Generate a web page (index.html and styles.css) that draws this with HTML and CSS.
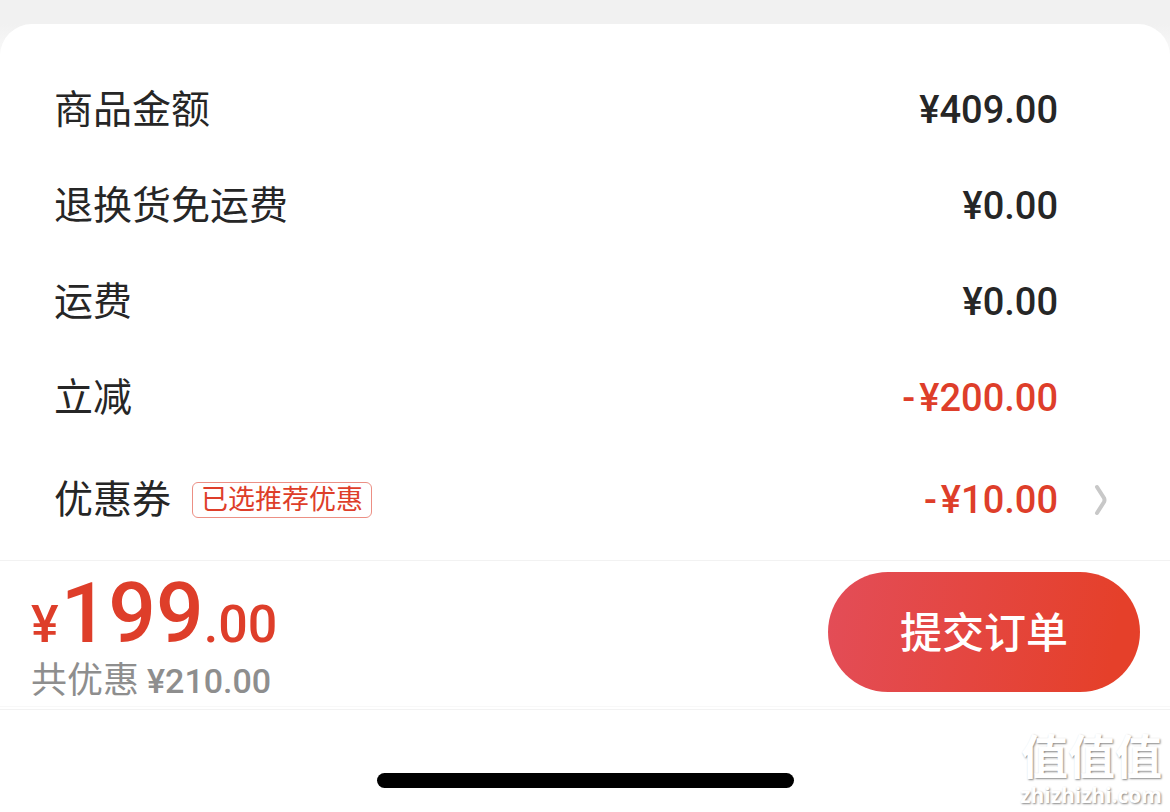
FILE: index.html
```html
<!DOCTYPE html>
<html lang="zh-CN">
<head>
    <meta charset="UTF-8">
    <meta name="viewport" content="width=device-width, initial-scale=1.0">
    <title>确认订单</title>
    <link rel="stylesheet" href="styles.css">
</head>
<body>
    <main class="summary">
        <div class="row">
            <span class="label">商品金额</span>
            <span class="amount">¥409.00</span>
        </div>
        <div class="row">
            <span class="label">退换货免运费</span>
            <span class="amount">¥0.00</span>
        </div>
        <div class="row">
            <span class="label">运费</span>
            <span class="amount">¥0.00</span>
        </div>
        <div class="row">
            <span class="label">立减</span>
            <span class="amount discount"><span class="minus">-</span>¥200.00</span>
        </div>
        <a class="row coupon" href="#">
            <span class="label">优惠券</span>
            <span class="tag">已选推荐优惠</span>
            <span class="amount discount"><span class="minus">-</span>¥10.00</span>
            <svg class="arrow" width="16" height="32" viewBox="0 0 16 32" aria-hidden="true">
                <path d="M5 3 L12 14 Q13 16 12 18 L5 29" fill="none" stroke="#c8c8c8" stroke-width="4" stroke-linejoin="round" stroke-linecap="round"/>
            </svg>
        </a>
    </main>

    <div class="submit-bar">
        <div class="total">
            <div class="price"><span class="symbol">¥</span><span class="integer">199</span><span class="decimal">.00</span></div>
            <div class="saved">共优惠<span class="saved-amount">¥210.00</span></div>
        </div>
        <button class="submit" type="button">提交订单</button>
    </div>

    <footer class="bottom">
        <div class="home-indicator"></div>
        <div class="watermark">
            <span class="watermark-name">值值值</span>
            <span class="watermark-site">zhizhizhi.com</span>
        </div>
    </footer>
</body>
</html>
```
FILE: styles.css
```css
* {
    box-sizing: border-box;
}
body {
    display: flex;
    flex-direction: column;
    min-height: 100vh;
    margin: 0;
    padding-top: 24px;
    background: linear-gradient(#f1f1f1 24px, #fafafa 60px, #fff 60px);
    font-family: Roboto, "Noto Sans CJK SC", sans-serif;
    color: #262626;
}
.summary {
    padding: 38px 62px 6px 54px;
    background-color: #fff;
    border-radius: 32px 32px 0 0;
}
.row {
    display: flex;
    align-items: center;
    height: 96px;
    padding-right: 50px;
    color: inherit;
    text-decoration: none;
}
.label {
    font-size: 39px;
    line-height: 56px;
}
.amount {
    margin-left: auto;
    font-size: 38px;
    font-weight: 500;
    line-height: 56px;
}
.discount {
    color: #de3e2a;
}
.minus {
    margin-right: 4px;
}
.coupon {
    height: 108px;
    padding-right: 0;
}
.tag {
    margin-left: 21px;
    padding: 0 8px;
    border: 1px solid #ec8f84;
    border-radius: 6px;
    color: #de3e2a;
    font-size: 27px;
    line-height: 34px;
}
.arrow {
    margin-left: 34px;
}
.submit-bar {
    display: flex;
    align-items: center;
    justify-content: space-between;
    height: 150px;
    padding: 0 30px 6px 31px;
    border-top: 1px solid #f2f2f2;
    border-bottom: 1px solid #f2f2f2;
    box-shadow: inset 0 -2px #fff, inset 0 -3px #f8f8f8;
}
.total {
    padding-top: 18px;
}
.price {
    color: #de3e2a;
    font-weight: 500;
    line-height: 56px;
}
.symbol,
.decimal {
    font-size: 52px;
}
.symbol {
    margin-right: 2px;
}
.integer {
    font-size: 84px;
}
.saved {
    color: #8e8e8e;
    font-size: 36px;
    line-height: 32px;
}
.saved-amount {
    margin-left: 8px;
    font-size: 34px;
    font-weight: 500;
}
.submit {
    width: 312px;
    height: 120px;
    padding: 0 0 6px;
    border: 0;
    border-radius: 60px;
    background: linear-gradient(100deg, #e34d58, #e5402a 90%);
    color: #fff;
    font-family: inherit;
    font-size: 42px;
    font-weight: 500;
}
.bottom {
    position: relative;
    flex: 1;
    min-height: 102px;
    padding-top: 63px;
}
.home-indicator {
    width: 417px;
    height: 15px;
    margin: 0 auto;
    border-radius: 8px;
    background-color: #000;
}
.watermark {
    position: absolute;
    right: 8px;
    bottom: 5px;
    display: flex;
    flex-direction: column;
    align-items: flex-end;
    color: #fff;
    font-weight: 700;
    text-shadow: 1px 1px 2px #888;
}
.watermark-name {
    font-size: 47px;
    line-height: 50px;
}
.watermark-site {
    font-family: "Open Sans", sans-serif;
    font-size: 21px;
    line-height: 24px;
}
```
